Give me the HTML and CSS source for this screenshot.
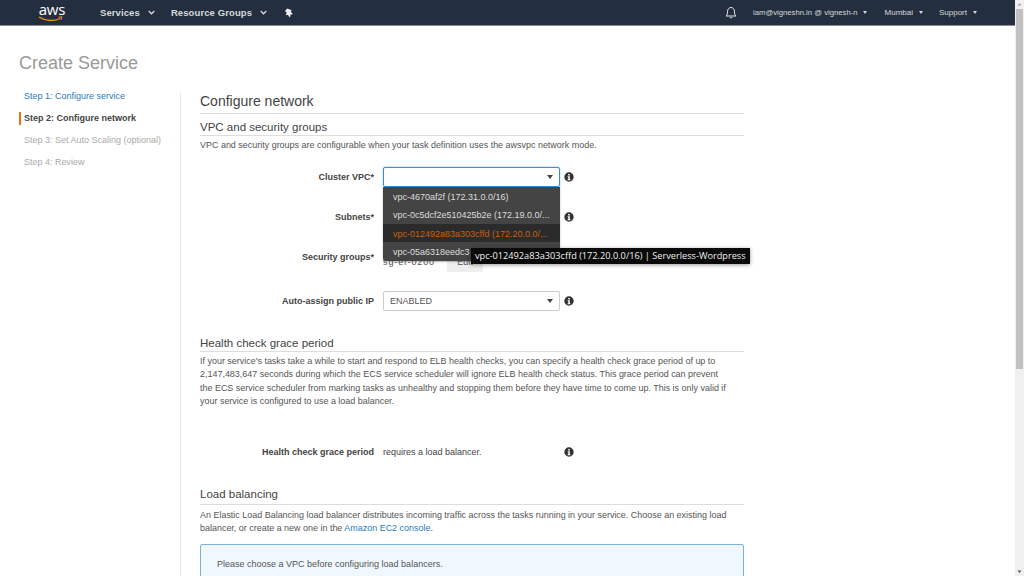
FILE: index.html
```html
<!DOCTYPE html>
<html lang="en">
<head>
<meta charset="utf-8">
<title>Create Service</title>
<link rel="stylesheet" href="styles.css">
</head>
<body>
<div class="app">
  <div class="page">
    <header class="nav">
      <div class="logo">
        <span class="logo-text">aws</span>
        <svg class="smile" width="26" height="6" viewBox="0 0 26 6"><path d="M1 1c6 4 15 4.500 21 1.500" fill="none" stroke="#f90" stroke-width="1.200"/><path d="M20.500 1.200l3.500-.4-1 3.200" fill="none" stroke="#f90" stroke-width="1"/></svg>
      </div>
      <a class="nav-main services">Services <svg class="chev" width="7" height="5" viewBox="0 0 7 5"><path d="M.7 1l2.800 2.800L6.300 1" fill="none" stroke="#d5dbdb" stroke-width="1.300"/></svg></a>
      <a class="nav-main groups">Resource Groups <svg class="chev" width="7" height="5" viewBox="0 0 7 5"><path d="M.7 1l2.800 2.800L6.300 1" fill="none" stroke="#d5dbdb" stroke-width="1.300"/></svg></a>
      <svg class="pin" width="10" height="10" viewBox="0 0 10 10"><path d="M3.200.5l4.500 1.800-1 1.500 2.300 2.200-2.500.8-.5 3-2.200-3-2 .5.800-2.800L1 3z" fill="#eee"/></svg>
      <div class="nav-right">
        <svg class="bell" width="12" height="13" viewBox="0 0 12 13"><path d="M1 10c1.200-1 1.500-2 1.500-4.500C2.500 3.200 4 1.500 6 1.500s3.500 1.700 3.500 4C9.500 8 9.800 9 11 10z M4.800 11.200c.3 1 2.100 1 2.400 0" fill="none" stroke="#e6e9ea" stroke-width="1"/></svg>
        <a class="nav-sub account">iam@vigneshn.in @ vignesh-n <i class="caret-sm"></i></a>
        <a class="nav-sub region">Mumbai <i class="caret-sm"></i></a>
        <a class="nav-sub support">Support <i class="caret-sm"></i></a>
      </div>
    </header>

    <h1 class="page-title">Create Service</h1>

    <div class="columns">
      <nav class="steps">
        <a class="step step-link">Step 1: Configure service</a>
        <a class="step step-current">Step 2: Configure network</a>
        <a class="step step-muted">Step 3: Set Auto Scaling (optional)</a>
        <a class="step step-muted">Step 4: Review</a>
      </nav>

      <main class="content">
        <h2 class="content-title">Configure network</h2>

        <section class="section vpc-section">
          <h3 class="section-title">VPC and security groups</h3>
          <p class="text">VPC and security groups are configurable when your task definition uses the awsvpc network mode.</p>

          <div class="row row-first">
            <label class="label">Cluster VPC*</label>
            <div class="control">
              <div class="select select-focus"><span class="select-value"></span><i class="caret"></i></div>
              <ul class="dropdown">
                <li class="opt">vpc-4670af2f (172.31.0.0/16)</li>
                <li class="opt">vpc-0c5dcf2e510425b2e (172.19.0.0/...</li>
                <li class="opt opt-active">vpc-012492a83a303cffd (172.20.0.0/...</li>
                <li class="opt">vpc-05a6318eedc3</li>
              </ul>
              <div class="tooltip">vpc-012492a83a303cffd (172.20.0.0/16) | Serverless-Wordpress</div>
            </div>
            <svg class="info" viewBox="0 0 10 10"><use href="#info-icon"/></svg>
          </div>

          <div class="row row-subnets">
            <label class="label">Subnets*</label>
            <div class="control"></div>
            <svg class="info" viewBox="0 0 10 10"><use href="#info-icon"/></svg>
          </div>

          <div class="row row-security">
            <label class="label">Security groups*</label>
            <div class="control sg-control"><span class="sg-id">sg-ef-0200</span><button class="edit">Edit</button></div>
          </div>

          <div class="row row-public">
            <label class="label">Auto-assign public IP</label>
            <div class="control">
              <div class="select"><span class="select-value">ENABLED</span><i class="caret"></i></div>
            </div>
            <svg class="info" viewBox="0 0 10 10"><use href="#info-icon"/></svg>
          </div>
        </section>

        <section class="section grace-section">
          <h3 class="section-title">Health check grace period</h3>
          <p class="text">If your service's tasks take a while to start and respond to ELB health checks, you can specify a health check grace period of up to 2,147,483,647 seconds during which the ECS service scheduler will ignore ELB health check status. This grace period can prevent the ECS service scheduler from marking tasks as unhealthy and stopping them before they have time to come up. This is only valid if your service is configured to use a load balancer.</p>
          <div class="row row-grace">
            <label class="label">Health check grace period</label>
            <div class="control plain">requires a load balancer.</div>
            <svg class="info" viewBox="0 0 10 10"><use href="#info-icon"/></svg>
          </div>
        </section>

        <section class="section lb-section">
          <h3 class="section-title">Load balancing</h3>
          <p class="text">An Elastic Load Balancing load balancer distributes incoming traffic across the tasks running in your service. Choose an existing load balancer, or create a new one in the <a class="link">Amazon EC2 console</a>.</p>
          <div class="notice">Please choose a VPC before configuring load balancers.</div>
        </section>
      </main>
    </div>
  </div>

  <div class="scrollbar">
    <svg class="scroll-arrow" width="9" height="9" viewBox="0 0 9 9"><path d="M2.500 5.500h4L4.500 3z" fill="#a3a3a3"/></svg>
    <div class="scroll-thumb"></div>
    <svg class="scroll-arrow" width="9" height="9" viewBox="0 0 9 9"><path d="M2.500 3.500h4L4.500 6z" fill="#555"/></svg>
  </div>
</div>
<svg class="defs" width="0" height="0">
  <symbol id="info-icon" viewBox="0 0 10 10">
    <path fill-rule="evenodd" d="M5 .3a4.700 4.700 0 1 0 0 9.400 4.700 4.700 0 0 0 0-9.400zM4.200 1.900h1.600v1.500H4.200zM3.700 4.200h2.100v3.100h.6v1H3.600v-1h.7V5.200h-.6z" fill="#333"/>
  </symbol>
</svg>
</body>
</html>
```
FILE: styles.css
```css
* { box-sizing: border-box; }
html, body { margin: 0; padding: 0; height: 576px; overflow: hidden; background: #fff; }
body { font-family: "Liberation Sans", Arial, sans-serif; color: #444; font-size: 9px; }
ul, p, h1, h2, h3 { margin: 0; padding: 0; font-weight: 400; }
.defs { position: absolute; }
.app { display: flex; height: 576px; overflow: hidden; }
.page { flex: 1; min-width: 0; height: 576px; overflow: hidden; }

.nav { height: 26px; background: #232f3e; border-bottom: 1px solid #8a8f96; display: flex; align-items: center; color: #d5dbdb; }
.logo { margin-left: 38px; width: 28px; height: 22px; position: relative; }
.logo-text { display: block; color: #fff; font-size: 15px; line-height: 14px; letter-spacing: -.2px; text-align: center; font-family: "Open Sans", sans-serif; }
.smile { display: block; margin-top: 0; }
.nav-main { font-size: 9.500px; font-weight: 700; color: #d5dbdb; letter-spacing: .1px; display: flex; align-items: center; gap: 8px; }
.services { margin-left: 34px; }
.groups { margin-left: 16px; }
.pin { margin-left: 17px; }
.nav-right { margin-left: auto; display: flex; align-items: center; margin-right: 38px; }
.bell { margin-right: 16px; }
.nav-sub { font-size: 8px; color: #d5dbdb; display: flex; align-items: center; gap: 6px; }
.account { font-size: 7.700px; gap: 5px; }
.region { margin-left: 18px; }
.support { margin-left: 16px; }
.caret-sm { width: 0; height: 0; border-left: 2.500px solid transparent; border-right: 2.500px solid transparent; border-top: 3px solid #d5dbdb; }

.page-title { font-size: 18px; line-height: 22px; color: #999; margin: 26px 0 0 19px; }

.columns { display: flex; margin-top: 14px; }
.steps { width: 161px; flex: none; margin-left: 19px; display: flex; flex-direction: column; }
.step { height: 22px; line-height: 14px; padding: 1px 0 0 5px; font-size: 9px; }
.step-link { color: #2b7bb9; }
.step-current { color: #444; font-weight: 700; position: relative; }
.step-current::before { content: ""; position: absolute; left: 0; top: 2px; width: 2px; height: 13px; background: #ec7211; }
.step-muted { color: #aaa; }

.content { width: 564px; border-left: 1px solid #e8e8e8; padding: 0 0 0 19px; margin-top: 4px; height: 500px; flex: none; }
.content-title { font-size: 14px; line-height: 18px; color: #444; padding-bottom: 3px; border-bottom: 1px solid #ddd; }
.section-title { font-size: 11.500px; line-height: 15px; color: #444; border-bottom: 1px solid #ddd; }
.text { font-size: 8.960px; line-height: 13.500px; color: #555; margin-top: 3px; padding-right: 16px; }
.vpc-section { margin-top: 6px; }
.row { display: flex; align-items: center; position: relative; }
.label { width: 174px; flex: none; text-align: right; font-weight: 700; font-size: 9px; color: #444; }
.control { width: 177px; margin-left: 9px; flex: none; position: relative; }
.row-first { margin-top: 14px; height: 20px; }
.row-subnets { margin-top: 20px; height: 20px; }
.row-security { margin-top: 20px; height: 20px; }
.row-public { margin-top: 24px; height: 20px; }
.select { height: 20px; border: 1px solid #ccc; border-radius: 2px; display: flex; align-items: center; justify-content: space-between; padding: 0 6px; background: #fff; font-size: 9px; color: #555; }
.select-focus { border-color: #3b8ec9; box-shadow: 0 0 2px rgba(59, 142, 201, .6); }
.caret { width: 0; height: 0; border-left: 3.500px solid transparent; border-right: 3.500px solid transparent; border-top: 4px solid #444; }
.info { width: 10px; height: 10px; margin-left: 4px; flex: none; }
.dropdown { list-style: none; position: absolute; top: 20px; left: 0; width: 177px; background: #444; border-radius: 0 0 3px 3px; z-index: 2; overflow: hidden; box-shadow: 0 1px 2px rgba(0,0,0,.3); }
.opt { height: 18.500px; line-height: 20px; padding-left: 10px; color: #ddd; font-size: 9px; white-space: nowrap; overflow: hidden; }
.opt-active { background: #2b2b2b; color: #c8600f; }
.tooltip { position: absolute; top: 81px; left: 88px; height: 16px; line-height: 16px; padding: 0 4px; background: #0a0a0a; color: #eee; font-family: "Open Sans", sans-serif; font-size: 9.200px; white-space: nowrap; z-index: 3; box-shadow: 0 1px 4px rgba(0,0,0,.4); }
.sg-control { display: flex; align-items: flex-start; height: 20px; }
.sg-id { font-size: 9px; color: #555; padding-top: 10px; letter-spacing: .9px; }
.edit { position: absolute; left: 64px; top: 7px; width: 36px; height: 18px; border: 0; padding: 0 0 2px; background: #eee; color: #555; font: 9px "Liberation Sans", sans-serif; border-radius: 2px; }

.grace-section { margin-top: 25px; }
.row-grace { margin-top: 35px; height: 16px; }
.plain { font-size: 9px; color: #444; }
.lb-section { margin-top: 27px; }
.lb-section .section-title { padding-bottom: 2px; }
.lb-section .text { margin-top: 4px; }
.link { color: #2b7bb9; }
.notice { margin-top: 8px; height: 60px; border: 1px solid #7fb3d8; border-radius: 2px; background: #f0f8ff; padding: 14px 16px; font-size: 9px; color: #555; }

.scrollbar { width: 9px; flex: none; background: #f0f0f0; display: flex; flex-direction: column; }
.scroll-arrow { display: block; flex: none; }
.scroll-thumb { height: 360px; flex: none; background: #c1c1c1; margin: 0 1px 198px; }
```
